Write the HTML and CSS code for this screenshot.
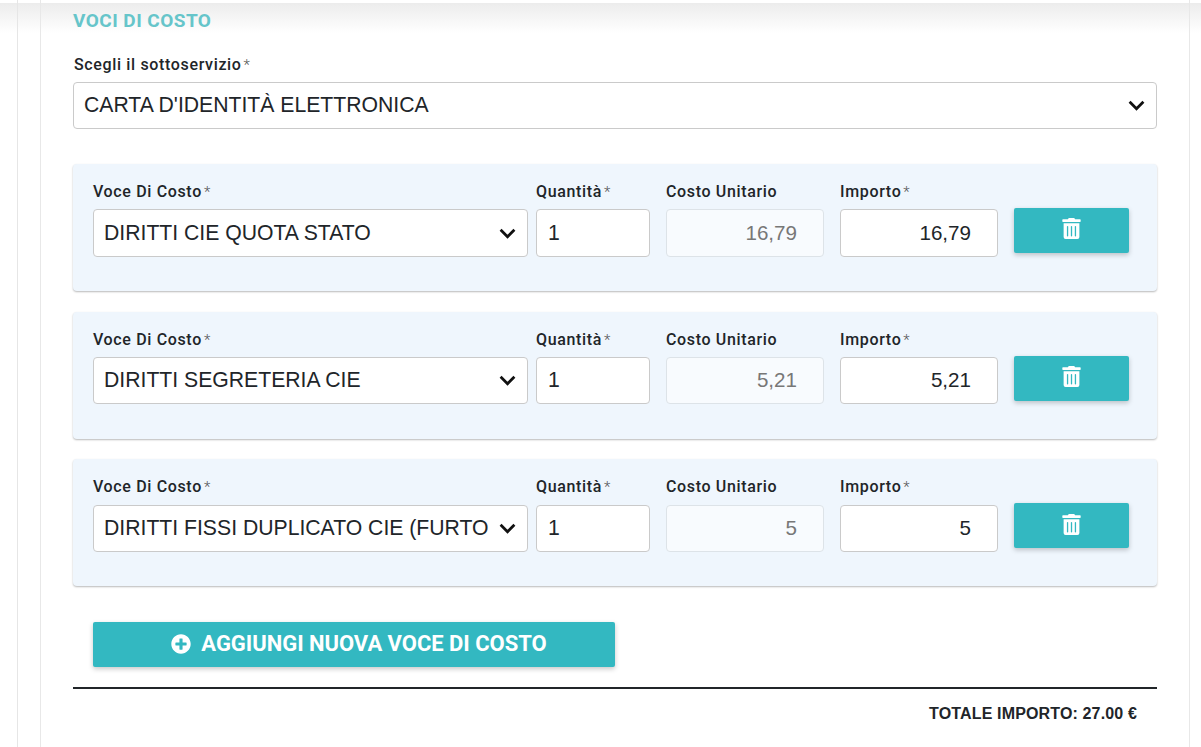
FILE: index.html
```html
<!DOCTYPE html>
<html lang="it">
<head>
<meta charset="utf-8">
<title>Voci di costo</title>
<link rel="stylesheet" href="styles.css">
</head>
<body>
<div class="top-shadow"></div>
<div class="outer">
  <main class="panel">
    <h2 class="title">VOCI DI COSTO</h2>
    <div class="field">
      <label class="label">Scegli il sottoservizio<span class="req">*</span></label>
      <div class="control select main-select"><span class="value">CARTA D'IDENTITÀ ELETTRONICA</span>
        <svg class="chev" viewBox="0 0 16 10"><path d="M1.500 1.500 8 8l6.500-6.500"/></svg></div>
    </div>

    <section class="row">
      <div class="f f-voce"><label class="label">Voce Di Costo<span class="req">*</span></label>
        <div class="control select"><span class="value">DIRITTI CIE QUOTA STATO</span><svg class="chev" viewBox="0 0 16 10"><path d="M1.500 1.500 8 8l6.500-6.500"/></svg></div></div>
      <div class="f f-qty"><label class="label">Quantità<span class="req">*</span></label>
        <div class="control"><span class="value">1</span></div></div>
      <div class="f f-unit"><label class="label">Costo Unitario</label>
        <div class="control disabled num"><span class="value">16,79</span></div></div>
      <div class="f f-imp"><label class="label">Importo<span class="req">*</span></label>
        <div class="control num"><span class="value">16,79</span></div></div>
      <button class="btn del" type="button"><svg class="trash" viewBox="0 0 448 512"><path d="M32 464a48 48 0 0 0 48 48h288a48 48 0 0 0 48-48V128H32zm272-256a16 16 0 0 1 32 0v224a16 16 0 0 1-32 0zm-96 0a16 16 0 0 1 32 0v224a16 16 0 0 1-32 0zm-96 0a16 16 0 0 1 32 0v224a16 16 0 0 1-32 0zM432 32H312l-9.400-18.700A24 24 0 0 0 281.100 0H166.800a23.700 23.700 0 0 0-21.400 13.300L136 32H16A16 16 0 0 0 0 48v32a16 16 0 0 0 16 16h416a16 16 0 0 0 16-16V48a16 16 0 0 0-16-16z"/></svg></button>
    </section>

    <section class="row">
      <div class="f f-voce"><label class="label">Voce Di Costo<span class="req">*</span></label>
        <div class="control select"><span class="value">DIRITTI SEGRETERIA CIE</span><svg class="chev" viewBox="0 0 16 10"><path d="M1.500 1.500 8 8l6.500-6.500"/></svg></div></div>
      <div class="f f-qty"><label class="label">Quantità<span class="req">*</span></label>
        <div class="control"><span class="value">1</span></div></div>
      <div class="f f-unit"><label class="label">Costo Unitario</label>
        <div class="control disabled num"><span class="value">5,21</span></div></div>
      <div class="f f-imp"><label class="label">Importo<span class="req">*</span></label>
        <div class="control num"><span class="value">5,21</span></div></div>
      <button class="btn del" type="button"><svg class="trash" viewBox="0 0 448 512"><path d="M32 464a48 48 0 0 0 48 48h288a48 48 0 0 0 48-48V128H32zm272-256a16 16 0 0 1 32 0v224a16 16 0 0 1-32 0zm-96 0a16 16 0 0 1 32 0v224a16 16 0 0 1-32 0zm-96 0a16 16 0 0 1 32 0v224a16 16 0 0 1-32 0zM432 32H312l-9.400-18.700A24 24 0 0 0 281.100 0H166.800a23.700 23.700 0 0 0-21.400 13.300L136 32H16A16 16 0 0 0 0 48v32a16 16 0 0 0 16 16h416a16 16 0 0 0 16-16V48a16 16 0 0 0-16-16z"/></svg></button>
    </section>

    <section class="row">
      <div class="f f-voce"><label class="label">Voce Di Costo<span class="req">*</span></label>
        <div class="control select"><span class="value">DIRITTI FISSI DUPLICATO CIE (FURTO</span><svg class="chev" viewBox="0 0 16 10"><path d="M1.500 1.500 8 8l6.500-6.500"/></svg></div></div>
      <div class="f f-qty"><label class="label">Quantità<span class="req">*</span></label>
        <div class="control"><span class="value">1</span></div></div>
      <div class="f f-unit"><label class="label">Costo Unitario</label>
        <div class="control disabled num"><span class="value">5</span></div></div>
      <div class="f f-imp"><label class="label">Importo<span class="req">*</span></label>
        <div class="control num"><span class="value">5</span></div></div>
      <button class="btn del" type="button"><svg class="trash" viewBox="0 0 448 512"><path d="M32 464a48 48 0 0 0 48 48h288a48 48 0 0 0 48-48V128H32zm272-256a16 16 0 0 1 32 0v224a16 16 0 0 1-32 0zm-96 0a16 16 0 0 1 32 0v224a16 16 0 0 1-32 0zm-96 0a16 16 0 0 1 32 0v224a16 16 0 0 1-32 0zM432 32H312l-9.400-18.700A24 24 0 0 0 281.100 0H166.800a23.700 23.700 0 0 0-21.400 13.300L136 32H16A16 16 0 0 0 0 48v32a16 16 0 0 0 16 16h416a16 16 0 0 0 16-16V48a16 16 0 0 0-16-16z"/></svg></button>
    </section>

    <div class="add-wrap">
      <button class="btn add" type="button"><svg class="plus" viewBox="0 0 512 512"><path d="M256 8C119 8 8 119 8 256s111 248 248 248 248-111 248-248S393 8 256 8zm144 276a12 12 0 0 1-12 12h-92v92a12 12 0 0 1-12 12h-56a12 12 0 0 1-12-12v-92h-92a12 12 0 0 1-12-12v-56a12 12 0 0 1 12-12h92v-92a12 12 0 0 1 12-12h56a12 12 0 0 1 12 12v92h92a12 12 0 0 1 12 12z"/></svg><span>AGGIUNGI NUOVA VOCE DI COSTO</span></button>
    </div>
    <div class="total">TOTALE IMPORTO: 27.00 €</div>
  </main>
</div>
</body>
</html>
```
FILE: styles.css
```css
* { box-sizing: border-box; }
html, body { margin: 0; height: 747px; overflow: hidden; background: #fff; }
body { position: relative; font-family: "Liberation Sans", Arial, sans-serif; color: #212529; }

.top-shadow {
  position: absolute; left: 0; right: 0; top: 3px; height: 30px;
  background: linear-gradient(#ececec, rgba(255,255,255,0));
  pointer-events: none;
}

.outer { position: relative; height: 747px; padding-left: 17px; }
.panel {
  width: 1173px;
  height: 747px;
  padding: 0 33px 0 56px;
  box-shadow: inset 1px 0 0 #e6e6e6;
  background:
    linear-gradient(#e8e8e8, #e8e8e8) 23px 0 / 1px 100% no-repeat,
    linear-gradient(#e8e8e8, #e8e8e8) 1172px 0 / 1px 100% no-repeat;
}

.title {
  margin: 0;
  padding-top: 12px;
  height: 56px;
  font: 700 19px/18px Roboto, sans-serif;
  color: #66c5ca;
  letter-spacing: 0.45px;
}

.field { display: flex; flex-direction: column; }
.field .label { padding-left: 1px; }
.label {
  display: block;
  font: 500 16px/18px Roboto, sans-serif;
  color: #212529;
  letter-spacing: 0.65px;
  height: 18px;
  white-space: nowrap;
}
.req { font-size: 15px; font-weight: 300; margin-left: 2px; color: #555; }

.control {
  display: flex;
  align-items: center;
  height: 47.400px;
  margin-top: 8.400px;
  padding: 0 11px 1px;
  background: #fff;
  border: 1px solid #cacaca;
  border-radius: 4px;
  font-size: 21.200px;
  line-height: 24px;
  color: #212529;
  white-space: nowrap;
  overflow: hidden;
}
.main-select { margin-top: 8px; }
.select { padding: 0 0 1px 10px; }
.select .value { flex: 1 1 0; min-width: 0; overflow: hidden; }
.chev {
  flex: none; width: 17px; height: 11px; margin: 1px 11px 0 10px;
  fill: none; stroke: #111; stroke-width: 2.600;
}
.num { justify-content: flex-end; padding-right: 26px; font-size: 20.600px; }
.disabled { background: #f8fbfe; border-color: #dde3e8; color: #777; }

.row {
  display: flex;
  height: 127.200px;
  margin-top: 34.600px;
  padding: 19px 28px 0 20px;
  background: #eff6fd;
  border-radius: 4px;
  box-shadow: 0 1px 2px rgba(0,0,0,.28);
}
.row + .row { margin-top: 20.400px; }
.f-voce { width: 435px; }
.f-qty { width: 114px; margin-left: 8px; }
.f-unit { width: 158px; margin-left: 16px; }
.f-imp { width: 158px; margin-left: 16px; }

.btn {
  display: flex; align-items: center; justify-content: center;
  border: 0; border-radius: 2px; background: #33b8c1; color: #fff;
  box-shadow: 0 2px 5px rgba(0,0,0,.22);
  padding: 0;
}
.del { width: 115px; height: 45px; margin: 25px 0 0 16px; }
.trash { width: 19px; height: 21px; fill: #fff; margin-top: -3px; }

.add-wrap { padding: 35.600px 0 20px 20px; }
.add { width: 522px; height: 45px; padding-left: 10px; font: 700 22px/24px Roboto, sans-serif; letter-spacing: -0.03px; }
.add span { white-space: nowrap; }
.plus { width: 20px; height: 20px; fill: #fff; margin-right: 10px; }

.total {
  border-top: 2px solid #212529;
  padding: 16px 20px 0 0;
  text-align: right;
  font: 700 16px/18px "Liberation Sans", sans-serif;
  color: #212529;
  letter-spacing: 0.15px;
}
```
